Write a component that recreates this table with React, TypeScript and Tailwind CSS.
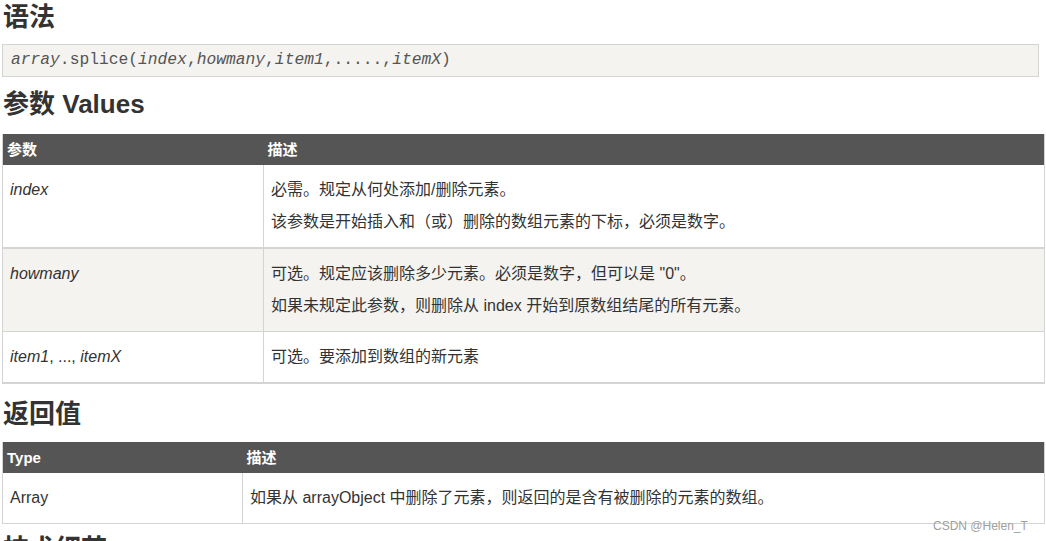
const font = "font-['Liberation_Sans','Noto_Sans_CJK_SC',sans-serif]";

const Heading = ({ children }: { children: React.ReactNode }) => (
  <h2 className="text-[26px] leading-[34px] font-bold text-[#333] pl-[3px]">
    {children}
  </h2>
);

const HeadCell = ({ children, w }: { children: React.ReactNode; w?: string }) => (
  <th
    className={`${w ?? ""} text-left align-top text-[15px] leading-[31px] font-bold text-white px-[4px] h-[31px]`}
  >
    {children}
  </th>
);

const Cell = ({ children, last }: { children: React.ReactNode; last?: boolean }) => (
  <td
    className={`align-top px-[7px] py-[13px] text-[16px] leading-[24px] text-[#333] ${
      last ? "" : "border-r border-[#d4d4d4]"
    }`}
  >
    {children}
  </td>
);

export default function App() {
  return (
    <div className={`${font} relative w-[1046px] h-[541px] overflow-hidden bg-white`}>
      <Heading>语法</Heading>

      <div className="mt-[10px] ml-[2px] w-[1037px] h-[33px] bg-[#f4f3f0] border border-[#d4d4d4] pl-[8px] flex items-center">
        <code className="font-['Liberation_Mono',monospace] text-[16.3px] text-[#555]">
          <i>array</i>.splice(<i>index</i>,<i>howmany</i>,<i>item1</i>,.....,<i>itemX</i>)
        </code>
      </div>

      <div className="mt-[10px]">
        <Heading>参数 Values</Heading>
      </div>

      <table className="mt-[13px] ml-[2px] w-[1043px] border-collapse border-x border-[#d4d4d4]">
        <thead>
          <tr className="bg-[#555555]">
            <HeadCell w="w-[261px]">参数</HeadCell>
            <HeadCell>描述</HeadCell>
          </tr>
        </thead>
        <tbody>
          <tr className="bg-white border-b-2 border-[#d4d4d4]">
            <Cell>
              <i>index</i>
            </Cell>
            <Cell last>
              <p>必需。规定从何处添加/删除元素。</p>
              <p className="mt-[8px]">该参数是开始插入和（或）删除的数组元素的下标，必须是数字。</p>
            </Cell>
          </tr>
          <tr className="bg-[#f4f3f0] border-b border-[#d4d4d4]">
            <Cell>
              <i>howmany</i>
            </Cell>
            <Cell last>
              <p>可选。规定应该删除多少元素。必须是数字，但可以是 "0"。</p>
              <p className="mt-[8px]">如果未规定此参数，则删除从 index 开始到原数组结尾的所有元素。</p>
            </Cell>
          </tr>
          <tr className="bg-white border-b-2 border-[#d4d4d4]">
            <Cell>
              <i>item1</i>, ..., <i>itemX</i>
            </Cell>
            <Cell last>可选。要添加到数组的新元素</Cell>
          </tr>
        </tbody>
      </table>

      <div className="mt-[13px]">
        <Heading>返回值</Heading>
      </div>

      <table className="mt-[11px] ml-[2px] w-[1043px] border-collapse border-x border-[#d4d4d4]">
        <thead>
          <tr className="bg-[#555555]">
            <HeadCell w="w-[240px]">Type</HeadCell>
            <HeadCell>描述</HeadCell>
          </tr>
        </thead>
        <tbody>
          <tr className="bg-white border-b border-[#d4d4d4]">
            <Cell>Array</Cell>
            <Cell last>如果从 arrayObject 中删除了元素，则返回的是含有被删除的元素的数组。</Cell>
          </tr>
        </tbody>
      </table>

      <div className="mt-[8px]">
        <Heading>技术细节</Heading>
      </div>

      <span className="absolute left-[933px] top-[518px] text-[12px] leading-[16px] text-[#a0a0a0] font-['Liberation_Sans',sans-serif]">
        CSDN @Helen_T
      </span>
    </div>
  );
}
